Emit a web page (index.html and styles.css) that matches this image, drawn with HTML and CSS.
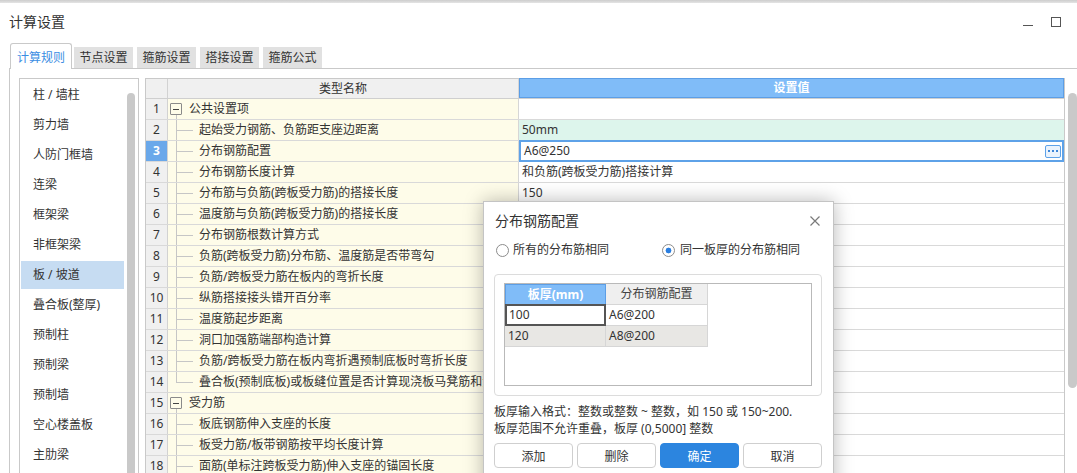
FILE: index.html
```html
<!DOCTYPE html>
<html lang="zh-CN">
<head>
<meta charset="utf-8">
<title>计算设置</title>
<link rel="stylesheet" href="styles.css">
</head>
<body>
<div class="topbar"></div>
<header class="titlebar">
  <span class="title">计算设置</span>
  <div class="winctl"><span class="min"></span><span class="max"></span></div>
</header>
<nav class="tabs">
  <span class="tab active">计算规则</span>
  <span class="tab">节点设置</span>
  <span class="tab">箍筋设置</span>
  <span class="tab">搭接设置</span>
  <span class="tab">箍筋公式</span>
</nav>
<section class="panel">
  <aside class="catlist">
    <ul>
      <li>柱 / 墙柱</li>
      <li>剪力墙</li>
      <li>人防门框墙</li>
      <li>连梁</li>
      <li>框架梁</li>
      <li>非框架梁</li>
      <li class="sel">板 / 坡道</li>
      <li>叠合板(整厚)</li>
      <li>预制柱</li>
      <li>预制梁</li>
      <li>预制墙</li>
      <li>空心楼盖板</li>
      <li>主肋梁</li>
    </ul>
    <div class="thumb"></div>
  </aside>
  <div class="grid">
    <div class="row head"><div class="num"></div><div class="name">类型名称</div><div class="val">设置值</div></div>
    <div class="row"><div class="num">1</div><div class="name group"><span class="toggle"><i></i></span>公共设置项</div><div class="val"></div></div>
    <div class="row"><div class="num">2</div><div class="name child"><span class="branch"></span>起始受力钢筋、负筋距支座边距离</div><div class="val green">50mm</div></div>
    <div class="row"><div class="num cur">3</div><div class="name child"><span class="branch"></span>分布钢筋配置</div><div class="val edit">A6@250<span class="more"><i></i><i></i><i></i></span></div></div>
    <div class="row"><div class="num">4</div><div class="name child"><span class="branch"></span>分布钢筋长度计算</div><div class="val">和负筋(跨板受力筋)搭接计算</div></div>
    <div class="row"><div class="num">5</div><div class="name child"><span class="branch"></span>分布筋与负筋(跨板受力筋)的搭接长度</div><div class="val">150</div></div>
    <div class="row"><div class="num">6</div><div class="name child"><span class="branch"></span>温度筋与负筋(跨板受力筋)的搭接长度</div><div class="val"></div></div>
    <div class="row"><div class="num">7</div><div class="name child"><span class="branch"></span>分布钢筋根数计算方式</div><div class="val"></div></div>
    <div class="row"><div class="num">8</div><div class="name child"><span class="branch"></span>负筋(跨板受力筋)分布筋、温度筋是否带弯勾</div><div class="val"></div></div>
    <div class="row"><div class="num">9</div><div class="name child"><span class="branch"></span>负筋/跨板受力筋在板内的弯折长度</div><div class="val"></div></div>
    <div class="row"><div class="num">10</div><div class="name child"><span class="branch"></span>纵筋搭接接头错开百分率</div><div class="val"></div></div>
    <div class="row"><div class="num">11</div><div class="name child"><span class="branch"></span>温度筋起步距离</div><div class="val"></div></div>
    <div class="row"><div class="num">12</div><div class="name child"><span class="branch"></span>洞口加强筋端部构造计算</div><div class="val"></div></div>
    <div class="row"><div class="num">13</div><div class="name child"><span class="branch"></span>负筋/跨板受力筋在板内弯折遇预制底板时弯折长度</div><div class="val"></div></div>
    <div class="row"><div class="num">14</div><div class="name child last"><span class="branch"></span>叠合板(预制底板)或板缝位置是否计算现浇板马凳筋和温度筋</div><div class="val"></div></div>
    <div class="row"><div class="num">15</div><div class="name group"><span class="toggle"><i></i></span>受力筋</div><div class="val"></div></div>
    <div class="row"><div class="num">16</div><div class="name child"><span class="branch"></span>板底钢筋伸入支座的长度</div><div class="val"></div></div>
    <div class="row"><div class="num">17</div><div class="name child"><span class="branch"></span>板受力筋/板带钢筋按平均长度计算</div><div class="val"></div></div>
    <div class="row"><div class="num">18</div><div class="name child"><span class="branch"></span>面筋(单标注跨板受力筋)伸入支座的锚固长度</div><div class="val"></div></div>
  </div>
  <div class="gthumb"></div>
</section>

<div class="dialog">
  <div class="dlg-head">
    <span class="dlg-title">分布钢筋配置</span>
    <svg class="close" width="10" height="10" viewBox="0 0 10 10"><path d="M0.5 0.5L9.5 9.5M9.5 0.5L0.5 9.5" stroke="#7a7a7a" stroke-width="1.2" fill="none"/></svg>
  </div>
  <div class="radios">
    <label class="radio first"><span class="dot"></span>所有的分布筋相同</label>
    <label class="radio"><span class="dot on"></span>同一板厚的分布筋相同</label>
  </div>
  <div class="groupbox">
    <div class="tblarea">
      <div class="trow thead"><div class="c1">板厚(mm)</div><div class="c2">分布钢筋配置</div></div>
      <div class="trow"><div class="c1 selcell">100</div><div class="c2">A6@200</div></div>
      <div class="trow alt"><div class="c1">120</div><div class="c2">A8@200</div></div>
    </div>
  </div>
  <p class="help">板厚输入格式：整数或整数 ~ 整数，如 150 或 150~200.<br>板厚范围不允许重叠，板厚 (0,5000] 整数</p>
  <div class="btns">
    <button class="btn">添加</button>
    <button class="btn">删除</button>
    <button class="btn primary">确定</button>
    <button class="btn">取消</button>
  </div>
</div>
</body>
</html>
```

FILE: styles.css
```css
html, body {
  margin: 0;
  padding: 0;
}
body {
  width: 1077px;
  height: 473px;
  overflow: hidden;
  position: relative;
  background: #fff;
  color: #333;
  font-family: "Noto Sans", "Noto Sans CJK SC", sans-serif;
  font-size: 12px;
}

.topbar {
  height: 3px;
  background: linear-gradient(#cdcdcd, #e4e4e4);
}

.titlebar {
  height: 40px;
  display: flex;
  align-items: flex-start;
  padding-left: 9px;
  padding-right: 16px;
}
.title {
  margin-top: 9px;
  line-height: 20px;
  font-size: 14px;
  color: #333;
}
.winctl {
  margin-left: auto;
  display: flex;
  align-items: flex-start;
  gap: 18px;
}
.min {
  width: 10px;
  height: 1px;
  background: #555;
  margin-top: 22px;
}
.max {
  width: 10px;
  height: 10px;
  box-sizing: border-box;
  border: 1px solid #555;
  margin-top: 14px;
}

.tabs {
  height: 25px;
  display: flex;
  align-items: flex-end;
  padding-left: 10px;
  gap: 4px;
}
.tab {
  width: 59px;
  height: 21px;
  line-height: 21px;
  text-align: center;
  background: #e1e1e1;
  color: #333;
}
.tab.active {
  position: relative;
  z-index: 1;
  width: 62px;
  height: 26px;
  box-sizing: border-box;
  padding-top: 3px;
  line-height: 21px;
  margin-bottom: -1px;
  margin-right: -2px;
  background: #fff;
  color: #3b8ee3;
  border: 1px solid #c9c9c9;
  border-bottom: none;
  border-radius: 3px 3px 0 0;
}

.panel {
  margin-left: 9px;
  border-top: 1px solid #c9c9c9;
  border-left: 1px solid #c9c9c9;
  padding: 9px 0 0 9px;
  height: 430px;
  display: flex;
  align-items: flex-start;
  gap: 6px;
}

.catlist {
  width: 120px;
  height: 420px;
  box-sizing: border-box;
  border: 1px solid #c9c9c9;
  padding: 2px 2px 0 1px;
  display: flex;
  align-items: flex-start;
  gap: 3px;
}
.catlist ul {
  list-style: none;
  margin: 0;
  padding: 0;
  width: 103px;
}
.catlist li {
  height: 28px;
  line-height: 28px;
  margin-bottom: 2px;
  padding-left: 12px;
  color: #333;
  white-space: nowrap;
}
.catlist li.sel {
  background: #c6dcf2;
}
.thumb {
  width: 8px;
  height: 420px;
  margin-top: 12px;
  border-radius: 4px;
  background: #c9c9c9;
}

.grid {
  width: 920px;
  box-sizing: border-box;
  border: 1px solid #c9c9c9;
  border-bottom: none;
  flex: none;
}
.row {
  display: flex;
  height: 21px;
  box-sizing: border-box;
  border-bottom: 1px solid #d9d9d9;
}
.row.head {
  height: 20px;
  border-bottom-color: #cfcfcf;
}
.num {
  width: 22px;
  flex: none;
  box-sizing: border-box;
  border-right: 1px solid #d2d2d2;
  background: #f0f0f0;
  text-align: center;
  line-height: 20px;
  color: #333;
}
.num.cur {
  background: #6aa8ea;
  color: #fff;
  font-weight: bold;
}
.name {
  width: 351px;
  flex: none;
  box-sizing: border-box;
  border-right: 1px solid #d6d6d6;
  background: #fefce9;
  display: flex;
  align-items: center;
  padding-left: 2px;
  line-height: 20px;
  white-space: nowrap;
  overflow: hidden;
  color: #333;
}
.head .num,
.head .name {
  background: #f0f0f0;
  line-height: 19px;
}
.head .name {
  justify-content: center;
  padding-left: 0;
}
.val {
  flex: 1;
  box-sizing: border-box;
  padding-left: 3px;
  line-height: 20px;
  background: #fff;
  display: flex;
  align-items: center;
  white-space: nowrap;
}
.head .val {
  justify-content: center;
  padding-left: 0;
  background: #80bcf8;
  border: 1px solid #5c9ee6;
  color: #fff;
  font-weight: bold;
  height: 20px;
  margin-top: -1px;
}
.val.green {
  background: #ddf5ec;
}
.val.edit {
  height: 22px;
  margin-top: -1px;
  border: 2px solid #5ea2e8;
  padding-left: 3px;
  padding-right: 1px;
}
.more {
  margin-left: auto;
  width: 16px;
  height: 13px;
  box-sizing: border-box;
  border: 1px solid #5ea2e8;
  border-radius: 2px;
  background: #eaf3fd;
  display: flex;
  align-items: center;
  justify-content: center;
  gap: 2px;
}
.more i {
  width: 2px;
  height: 2px;
  background: #3d86d8;
}

.group {
  background: linear-gradient(#c6c6c6, #c6c6c6) 8px 16px / 1px 4px no-repeat, #fefce9;
}
.toggle {
  width: 12px;
  height: 12px;
  box-sizing: border-box;
  border: 1px solid #8a8a8a;
  border-radius: 1px;
  margin-right: 7px;
  display: flex;
  align-items: center;
  justify-content: center;
  flex: none;
}
.toggle i {
  width: 6px;
  height: 1px;
  background: #444;
}
.child {
  padding-left: 8px;
}
.branch {
  width: 17px;
  height: 20px;
  flex: none;
  margin-right: 6px;
  background:
    linear-gradient(#c6c6c6, #c6c6c6) 0 0 / 1px 100% no-repeat,
    linear-gradient(#c6c6c6, #c6c6c6) 0 10px / 100% 1px no-repeat;
}
.last .branch {
  background:
    linear-gradient(#c6c6c6, #c6c6c6) 0 0 / 1px 11px no-repeat,
    linear-gradient(#c6c6c6, #c6c6c6) 0 10px / 100% 1px no-repeat;
}

.gthumb {
  width: 9px;
  height: 295px;
  margin-left: -3px;
  margin-top: 15px;
  border-radius: 5px;
  background: #c9c9c9;
  flex: none;
}

/* dialog */
.dialog {
  position: absolute;
  left: 483px;
  top: 201px;
  width: 351px;
  height: 300px;
  box-sizing: border-box;
  border: 1px solid #c4c4c4;
  background: #fff;
  box-shadow: 0 0 18px rgba(0, 0, 0, 0.28);
  padding: 0 11px 0 10px;
  z-index: 5;
}
.dlg-head {
  height: 38px;
  display: flex;
  align-items: center;
}
.dlg-title {
  font-size: 14px;
  line-height: 20px;
  padding-left: 1px;
  color: #333;
}
.close {
  margin-left: auto;
  margin-right: 2px;
  margin-top: -1px;
}
.radios {
  height: 20px;
  display: flex;
  align-items: center;
  padding-left: 2px;
}
.radio {
  display: flex;
  align-items: center;
  line-height: 20px;
  color: #333;
}
.radio.first {
  width: 166px;
}
.dot {
  width: 13px;
  height: 13px;
  box-sizing: border-box;
  border: 1px solid #8c8c8c;
  border-radius: 50%;
  margin-right: 4px;
  background: #fff;
}
.dot.on {
  margin-right: 5px;
  background: radial-gradient(circle, #2a7ee0 0 2.6px, #fff 3.2px);
}
.groupbox {
  margin-top: 14px;
  height: 122px;
  box-sizing: border-box;
  border: 1px solid #dcdcdc;
  border-radius: 4px;
  padding: 8px 9px 9px 9px;
}
.tblarea {
  height: 103px;
  box-sizing: border-box;
  border: 1px solid #b9b9b9;
}
.trow {
  display: flex;
  height: 21px;
  width: 203px;
  box-sizing: border-box;
  border-bottom: 1px solid #d6d6d6;
}
.trow .c1,
.trow .c2 {
  box-sizing: border-box;
  line-height: 20px;
  padding-left: 3px;
  border-right: 1px solid #d6d6d6;
  color: #333;
}
.trow .c1 {
  width: 101px;
}
.trow .c2 {
  width: 102px;
}
.thead .c1 {
  background: #80bcf8;
  color: #fff;
  font-weight: bold;
  text-align: center;
  padding-left: 0;
  border: 1px solid #5c9ee6;
  height: 21px;
  margin-bottom: -1px;
}
.thead .c2 {
  background: #efefef;
  color: #444;
  text-align: center;
  padding-left: 0;
}
.selcell {
  border: 2px solid #555 !important;
  height: 22px;
  margin-top: -1px;
  padding-left: 2px !important;
  line-height: 18px !important;
}
.alt .c1,
.alt .c2 {
  background: #e8e7e4;
}
.help {
  margin: 7px 0 0 0;
  line-height: 17px;
  color: #333;
  white-space: nowrap;
}
.btns {
  margin-top: 6px;
  display: flex;
  justify-content: space-between;
}
.btn {
  width: 79px;
  height: 25px;
  box-sizing: border-box;
  border: 1px solid #cfcfcf;
  border-radius: 4px;
  background: #fff;
  color: #333;
  font-family: "Noto Sans", "Noto Sans CJK SC", sans-serif;
  font-size: 12px;
  padding: 0;
}
.btn.primary {
  background: #2c85df;
  border-color: #2c85df;
  color: #fff;
}
```
